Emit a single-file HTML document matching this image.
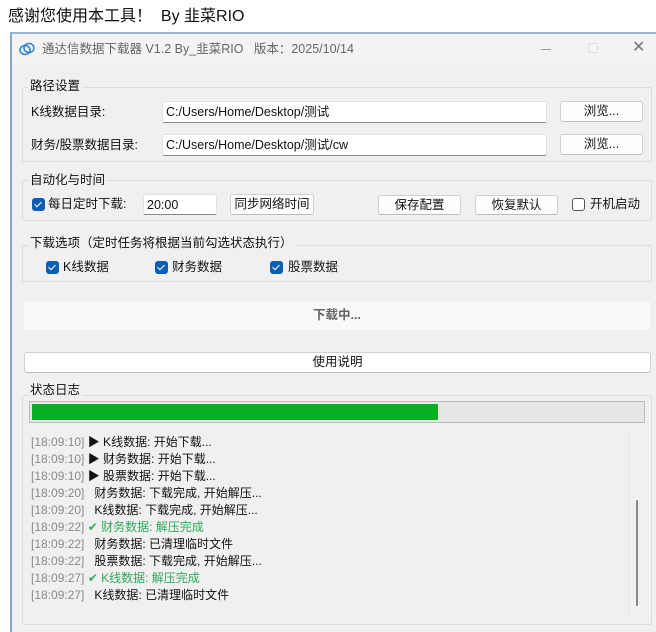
<!DOCTYPE html>
<html><head><meta charset="utf-8"><style>
*{box-sizing:border-box;margin:0;padding:0}
body{width:656px;height:617px;overflow:hidden;background:#fff;font-family:"Liberation Sans","Noto Sans CJK SC",sans-serif;font-size:12px;color:#111;position:relative;line-height:16px}
.a{position:absolute}
.win{left:10px;top:32px;width:660px;height:600px;background:#f0f0f0;border-left:2px solid #8aa6cc;border-top:2px solid #9bb3d3}
.tb{left:12px;top:34px;width:644px;height:30px;background:#f3f3f3}
.grp{border:1px solid #dcdcdc;border-radius:2px}
.lbl{background:#f0f0f0;padding:0 2px;font-size:12.5px;line-height:16px}
.inp{background:#fff;border:1px solid #e2e2e2;border-bottom:1px solid #8a8a8a;border-radius:2px;padding-left:3px;line-height:20px;font-size:12.5px}
.btn{background:#fdfdfd;border:1px solid #d0d0d0;border-bottom-color:#bdbdbd;border-radius:3px;text-align:center;line-height:19px;font-size:12.5px}
.cb{width:13px;height:13px;border-radius:3px;background:#0a5fb4}
.cb::after{content:"";position:absolute;left:4px;top:1.5px;width:3px;height:6px;border:solid #fff;border-width:0 1.3px 1.3px 0;transform:rotate(45deg)}
.log{font-size:12px;line-height:17px;white-space:nowrap}
.t{color:#8a8a8a}
.g{color:#2ea85a}
</style></head><body>
<div class="a" style="left:8px;top:7px;font-size:16px;line-height:20px;color:#111">感谢您使用本工具！&nbsp; By 韭菜RIO</div>
<div class="a win"></div>
<div class="a tb"></div>
<svg class="a" style="left:19px;top:42px" width="16" height="15" viewBox="0 0 16 15"><ellipse cx="6" cy="8" rx="5" ry="4.5" fill="none" stroke="#2a7fd0" stroke-width="1.5"/><ellipse cx="10" cy="6" rx="5" ry="4.5" fill="none" stroke="#2a7fd0" stroke-width="1.5"/></svg>
<div class="a" style="left:42px;top:41px;color:#666;font-size:12.5px">通达信数据下载器 V1.2 By_韭菜RIO&nbsp;&nbsp; 版本：2025/10/14</div>
<div class="a" style="left:541px;top:49px;width:10px;height:1px;background:#999"></div>
<div class="a" style="left:588px;top:43px;width:10px;height:10px;border:1px solid #ddd"></div>
<div class="a" style="left:632px;top:40px;color:#777;font-size:16px">✕</div>

<div class="a grp" style="left:22px;top:87px;width:630px;height:75px"></div>
<div class="a lbl" style="left:28px;top:78px">路径设置</div>
<div class="a" style="left:31px;top:104px;font-size:12.5px">K线数据目录:</div>
<div class="a inp" style="left:162px;top:101px;width:385px;height:22px">C:/Users/Home/Desktop/测试</div>
<div class="a btn" style="left:560px;top:101px;width:83px;height:21px">浏览...</div>
<div class="a" style="left:31px;top:137px;font-size:12.5px">财务/股票数据目录:</div>
<div class="a inp" style="left:162px;top:134px;width:385px;height:22px">C:/Users/Home/Desktop/测试/cw</div>
<div class="a btn" style="left:560px;top:134px;width:83px;height:21px">浏览...</div>

<div class="a grp" style="left:22px;top:180px;width:630px;height:41px"></div>
<div class="a lbl" style="left:28px;top:172px">自动化与时间</div>
<div class="a cb" style="left:32px;top:198px"></div>
<div class="a" style="left:48px;top:196px;font-size:12.5px">每日定时下载:</div>
<div class="a inp" style="left:143px;top:194px;width:74px;height:21px">20:00</div>
<div class="a btn" style="left:230px;top:194px;width:84px;height:21px">同步网络时间</div>
<div class="a btn" style="left:378px;top:195px;width:83px;height:20px">保存配置</div>
<div class="a btn" style="left:475px;top:195px;width:83px;height:20px">恢复默认</div>
<div class="a" style="left:572px;top:198px;width:13px;height:13px;border:1px solid #555;border-radius:3px;background:#fff"></div>
<div class="a" style="left:590px;top:196px;font-size:12.5px">开机启动</div>

<div class="a grp" style="left:22px;top:245px;width:630px;height:37px"></div>
<div class="a lbl" style="left:28px;top:235px">下载选项（定时任务将根据当前勾选状态执行）</div>
<div class="a cb" style="left:46px;top:261px"></div>
<div class="a" style="left:63px;top:259px;font-size:12.5px">K线数据</div>
<div class="a cb" style="left:155px;top:261px"></div>
<div class="a" style="left:172px;top:259px;font-size:12.5px">财务数据</div>
<div class="a cb" style="left:270px;top:261px"></div>
<div class="a" style="left:288px;top:259px;font-size:12.5px">股票数据</div>

<div class="a" style="left:24px;top:301px;width:626px;height:29px;background:#f9f9f9;border-radius:3px;text-align:center;line-height:29px;font-weight:bold;color:#666;font-size:12.5px">下载中...</div>
<div class="a btn" style="left:24px;top:352px;width:627px;height:21px;background:#fff">使用说明</div>

<div class="a grp" style="left:22px;top:395px;width:630px;height:230px"></div>
<div class="a lbl" style="left:28px;top:382px">状态日志</div>
<div class="a" style="left:29px;top:401px;width:616px;height:22px;background:#e6e6e6;border:1px solid #bcbcbc"></div>
<div class="a" style="left:32px;top:404px;width:406px;height:16px;background:#06b025"></div>
<div class="a log" style="left:31px;top:434px">
<div><span class="t">[18:09:10]</span> ▶ K线数据: 开始下载...</div>
<div><span class="t">[18:09:10]</span> ▶ 财务数据: 开始下载...</div>
<div><span class="t">[18:09:10]</span> ▶ 股票数据: 开始下载...</div>
<div><span class="t">[18:09:20]</span> &nbsp; 财务数据: 下载完成, 开始解压...</div>
<div><span class="t">[18:09:20]</span> &nbsp; K线数据: 下载完成, 开始解压...</div>
<div><span class="t">[18:09:22]</span> <span class="g">✔ 财务数据: 解压完成</span></div>
<div><span class="t">[18:09:22]</span> &nbsp; 财务数据: 已清理临时文件</div>
<div><span class="t">[18:09:22]</span> &nbsp; 股票数据: 下载完成, 开始解压...</div>
<div><span class="t">[18:09:27]</span> <span class="g">✔ K线数据: 解压完成</span></div>
<div><span class="t">[18:09:27]</span> &nbsp; K线数据: 已清理临时文件</div>
</div>
<div class="a" style="left:628px;top:430px;width:1px;height:187px;background:#e4e4e4"></div>
<div class="a" style="left:636px;top:500px;width:2px;height:106px;background:#888;border-radius:1px"></div>
</body></html>
